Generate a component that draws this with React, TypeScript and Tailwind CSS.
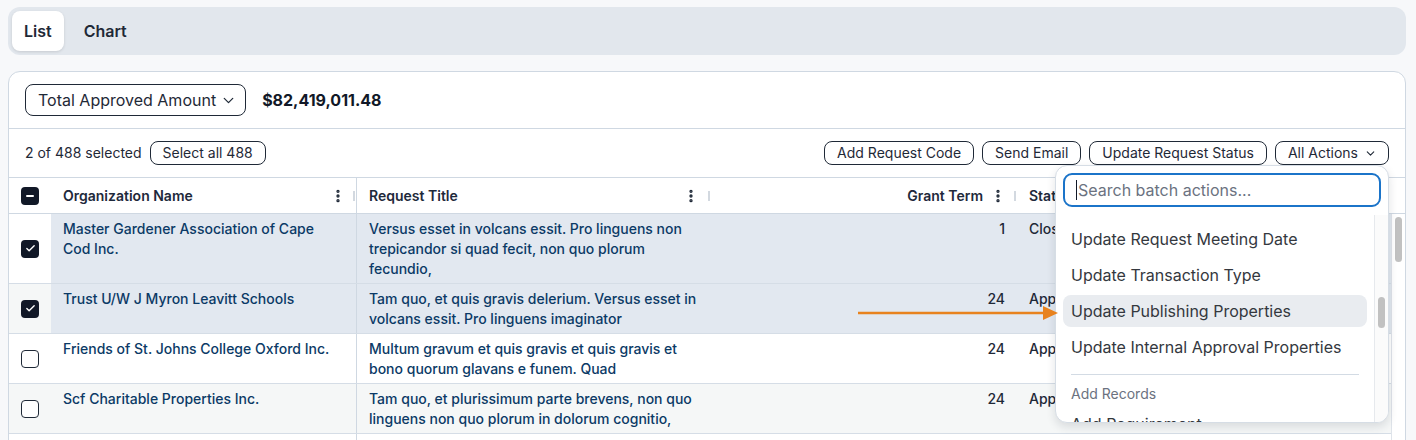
import { Check, ChevronDown, EllipsisVertical } from "lucide-react";

const rows = [
  {
    sel: true,
    org: "Master Gardener Association of Cape Cod Inc.",
    title: "Versus esset in volcans essit. Pro linguens non trepicandor si quad fecit, non quo plorum fecundio,",
    term: "1",
    status: "Closed",
  },
  {
    sel: true,
    org: "Trust U/W J Myron Leavitt Schools",
    title: "Tam quo, et quis gravis delerium. Versus esset in volcans essit. Pro linguens imaginator",
    term: "24",
    status: "Approved",
  },
  {
    sel: false,
    org: "Friends of St. Johns College Oxford Inc.",
    title: "Multum gravum et quis gravis et quis gravis et bono quorum glavans e funem. Quad",
    term: "24",
    status: "Approved",
  },
  {
    sel: false,
    org: "Scf Charitable Properties Inc.",
    title: "Tam quo, et plurissimum parte brevens, non quo linguens non quo plorum in dolorum cognitio,",
    term: "24",
    status: "Approved",
  },
  {
    sel: false,
    org: "Pinellas County Education Foundation Inc.",
    title: "Versus esset in volcans essit. Pro linguens non trepicandor.",
    term: "12",
    status: "Approved",
  },
];

const actions = [
  "Update Request Meeting Date",
  "Update Transaction Type",
  "Update Publishing Properties",
  "Update Internal Approval Properties",
];

function Box({ state }: { state: "on" | "off" | "mixed" }) {
  if (state === "off") {
    return <div className="h-[18px] w-[18px] rounded-[4px] border-[1.5px] border-[#1f2937] bg-white" />;
  }
  return (
    <div className="flex h-[18px] w-[18px] items-center justify-center rounded-[4px] bg-[#111827]">
      {state === "on" ? (
        <Check size={11} strokeWidth={3} className="text-white" />
      ) : (
        <div className="h-[2px] w-[8px] rounded-full bg-white" />
      )}
    </div>
  );
}

function Handle() {
  return <div className="h-[10px] w-[2px] bg-[#d3d9e0]" />;
}

function Kebab() {
  return <EllipsisVertical size={16} strokeWidth={3} className="shrink-0 text-[#1f2937]" />;
}

export default function App() {
  return (
    <div
      className="relative h-[440px] overflow-hidden bg-[#f7f8fa] pl-2 pr-[10px] pt-[7px] text-[#1f2937]"
      style={{ fontFamily: "Inter, 'Noto Sans', sans-serif" }}
    >
      {/* TABS */}
      <div className="flex h-12 items-center gap-2 rounded-xl bg-[#e2e7ed] px-1">
        <div className="flex h-10 items-center rounded-lg bg-white px-3 text-base font-semibold shadow-[0_1px_3px_rgba(0,0,0,0.12)]">
          List
        </div>
        <div className="flex h-10 items-center px-3 text-base font-semibold">Chart</div>
      </div>

      {/* CARD */}
      <div className="mt-4 rounded-xl border border-[#cfd8e2] bg-white">
        <div className="box-border flex h-[57px] items-center gap-4 border-b border-[#cfd8e2] px-4">
          <button className="flex h-8 items-center gap-1 rounded-lg border border-[#1f2937] pl-3 pr-2 text-base text-[#1f2937]">
            Total Approved Amount
            <ChevronDown size={17} strokeWidth={1.75} />
          </button>
          <span className="text-base font-bold text-[#111827]">$82,419,011.48</span>
        </div>

        <div className="box-border flex h-[49px] items-center justify-between border-b border-[#cfd8e2] px-4 text-sm">
          <div className="flex items-center gap-2">
            <span>2 of 488 selected</span>
            <button className="flex h-6 items-center rounded-lg border border-[#1f2937] px-3">Select all 488</button>
          </div>
          <div className="flex items-center gap-2">
            <button className="flex h-6 items-center rounded-lg border border-[#1f2937] px-3">Add Request Code</button>
            <button className="flex h-6 items-center rounded-lg border border-[#1f2937] px-3">Send Email</button>
            <button className="flex h-6 items-center rounded-lg border border-[#1f2937] px-3">Update Request Status</button>
            <div className="relative">
              <button className="flex h-6 items-center gap-[6px] rounded-lg border border-[#1f2937] pl-3 pr-[11px]">
                All Actions
                <ChevronDown size={13} strokeWidth={2} />
              </button>

              {/* DROPDOWN */}
              <div className="absolute right-0 top-full z-20 flex h-[258px] w-[334px] flex-col overflow-hidden rounded-xl border border-[#d6dde5] bg-white shadow-[0_4px_10px_rgba(15,23,42,0.12)]">
                <div className="px-[7px] pb-2 pt-[7px]">
                  <div className="flex h-[34px] items-center rounded-[9px] border-2 border-[#1b74c9] pl-[11px] text-base text-[#6b7280]">
                    <span className="mr-px h-5 w-px bg-[#111827]" />
                    Search batch actions...
                  </div>
                </div>
                <div className="flex min-h-0 flex-1">
                  <div className="flex-1 overflow-hidden px-[7px] pt-2 text-base text-[#34383e]">
                    {actions.map((a) => (
                      <div
                        key={a}
                        className={`mb-1 flex h-8 items-center rounded-lg px-2 ${
                          a === "Update Publishing Properties" ? "bg-[#e9ecf0]" : ""
                        }`}
                      >
                        {a}
                      </div>
                    ))}
                    <div className="mx-2 mt-[11px] h-px bg-[#d3dbe4]" />
                    <div className="mt-[9px] flex h-5 items-center px-2 text-sm text-[#6b7280]">Add Records</div>
                    <div className="mt-1 flex h-8 items-center px-2">Add Requirement</div>
                  </div>
                  <div className="w-[14px] border-l border-[#e6e9ed] bg-[#fbfbfb]">
                    <div className="mx-auto mt-[82px] h-[31px] w-[7px] rounded-full bg-[#c1c1c1]" />
                  </div>
                </div>
              </div>
            </div>
          </div>
        </div>

        {/* TABLE HEADER */}
        <div className="box-border flex h-[36px] items-center border-b border-[#cfd8e2] text-sm font-semibold text-[#1e293b]">
          <div className="flex h-full w-[42px] items-center pl-3">
            <Box state="mixed" />
          </div>
          <div className="flex h-full w-[306px] items-center border-r border-[#cfd8e2] pl-3">
            <span className="flex-1">Organization Name</span>
            <Kebab />
            <div className="ml-[7px] mr-px">
              <Handle />
            </div>
          </div>
          <div className="flex h-full w-[355px] items-center pl-3">
            <span className="flex-1">Request Title</span>
            <Kebab />
            <div className="ml-[9px] mr-[2px]">
              <Handle />
            </div>
          </div>
          <div className="flex h-full w-[305px] items-center justify-end pl-3 pr-px">
            <span>Grant Term</span>
            <div className="ml-[7px]">
              <Kebab />
            </div>
            <div className="ml-2">
              <Handle />
            </div>
          </div>
          <div className="flex h-full flex-1 items-center pl-3">Status</div>
        </div>

        {/* TABLE BODY */}
        <div className="flex">
          <div className="flex-1">
            {rows.map((r, i) => {
              const base = i % 2 === 1 ? "bg-[#f5f7f7]" : "bg-white";
              const cell = r.sel ? "bg-[#e2e8f0]" : base;
              return (
                <div key={r.org} className="flex border-b border-[#d5dde6] text-sm font-medium leading-5">
                  <div className={`flex w-[42px] items-center pl-3 ${base}`}>
                    <Box state={r.sel ? "on" : "off"} />
                  </div>
                  <div className={`w-[306px] border-r border-[#cfd8e2] pb-[4px] pl-3 pr-3 pt-[5px] text-[#0b3a66] ${cell}`}>
                    {r.org}
                  </div>
                  <div className={`w-[355px] pb-[4px] pl-3 pr-3 pt-[5px] text-[#0b3a66] ${cell}`}>{r.title}</div>
                  <div className={`w-[305px] pb-[4px] pr-3 pt-[5px] text-right ${cell}`}>{r.term}</div>
                  <div className={`flex-1 pb-[4px] pl-3 pt-[5px] ${cell}`}>{r.status}</div>
                </div>
              );
            })}
          </div>
          <div className="w-[14px] border-l border-[#dfe4ea] bg-white">
            <div className="ml-[3px] mt-[3px] h-[45px] w-[7px] rounded-full bg-[#c1c1c1]" />
          </div>
        </div>
      </div>

      {/* ANNOTATION ARROW */}
      <svg className="absolute left-[858px] top-[306px] z-30" width="200" height="14" viewBox="0 0 200 14">
        <line x1="0" y1="7" x2="188" y2="7" stroke="#e8821e" strokeWidth="2.5" />
        <polygon points="185,0 200,7 185,14" fill="#e8821e" />
      </svg>
    </div>
  );
}
